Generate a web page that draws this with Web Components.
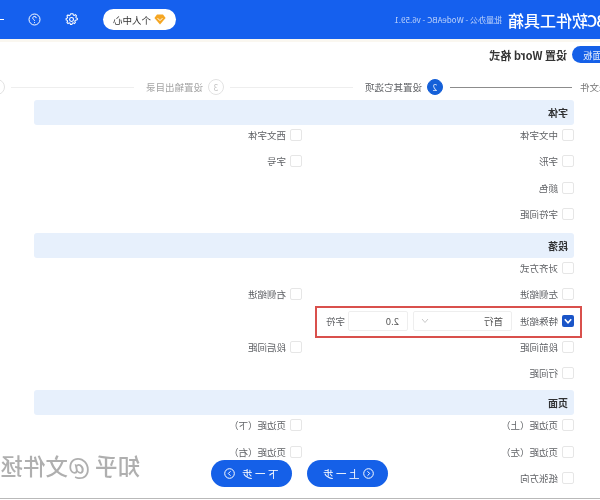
<!DOCTYPE html>
<html lang="zh">
<head>
<meta charset="utf-8">
<title>设置 Word 格式</title>
<style>
  html, body { margin: 0; padding: 0; background: #fff; overflow: hidden; }
  body { font-family: "Noto Sans CJK SC", "Liberation Sans", sans-serif; }
</style>
</head>
<body>
<wb-app>
  <wb-header slot="header"></wb-header>
  <wb-title></wb-title>
  <wb-steps></wb-steps>

  <wb-section title="字体" style="margin-bottom: 9px">
    <wb-option label="中文字体"></wb-option>
    <wb-option label="西文字体"></wb-option>
    <wb-option label="字形"></wb-option>
    <wb-option label="字号"></wb-option>
    <wb-option label="颜色"></wb-option>
    <wb-option></wb-option>
    <wb-option label="字符间距"></wb-option>
    <wb-option></wb-option>
  </wb-section>

  <wb-section title="段落" style="margin-bottom: 7px">
    <wb-option label="对齐方式"></wb-option>
    <wb-option></wb-option>
    <wb-option label="左侧缩进"></wb-option>
    <wb-option label="右侧缩进"></wb-option>
    <wb-indent></wb-indent>
    <wb-option label="段前间距"></wb-option>
    <wb-option label="段后间距"></wb-option>
    <wb-option label="行间距"></wb-option>
    <wb-option></wb-option>
  </wb-section>

  <wb-section title="页面">
    <wb-option label="页边距（上）"></wb-option>
    <wb-option label="页边距（下）"></wb-option>
    <wb-option label="页边距（左）"></wb-option>
    <wb-option label="页边距（右）"></wb-option>
    <wb-option label="纸张方向"></wb-option>
    <wb-option></wb-option>
  </wb-section>

  <wb-footer slot="overlay"></wb-footer>
  <wb-watermark slot="overlay"></wb-watermark>
</wb-app>

<script>
// the whole reference is a mirrored screenshot, so the app is laid out normally and flipped once here
class WbApp extends HTMLElement {
  constructor() {
    super();
    this.attachShadow({ mode: 'open' });
    this.shadowRoot.innerHTML = `
      <style>
        :host {
          display: block;
          width: 600px;
          height: 500px;
          overflow: hidden;
          transform: scaleX(-1);
          font-family: "Noto Sans CJK SC", "Liberation Sans", sans-serif;
          color: #606266;
        }
        .frame { display: flex; flex-direction: column; height: 498px; position: relative; overflow: hidden; }
        .edge { height: 1px; background: #b9b9b9; }
        .body { flex: 1; min-height: 0; overflow: hidden; }
      </style>
      <div class="frame">
        <slot name="header"></slot>
        <div class="body"><slot></slot></div>
        <slot name="overlay"></slot>
      </div>
      <div class="edge"></div>
    `;
  }
}

class WbHeader extends HTMLElement {
  constructor() {
    super();
    this.attachShadow({ mode: 'open' });
    this.shadowRoot.innerHTML = `
      <style>
        :host {
          display: flex;
          align-items: center;
          height: 39px;
          flex: none;
          background: #1560ee;
          border-bottom: 3px solid #faf7f0;
          color: #fff;
          overflow: hidden;
        }
        .name { font-size: 16px; font-weight: 500; margin-left: -48px; white-space: nowrap; }
        .name span { letter-spacing: -1px; }
        .sub { font-size: 8px; margin-left: 6px; color: rgba(255,255,255,.72); white-space: nowrap; }
        .pill {
          display: flex;
          align-items: center;
          gap: 3px;
          box-sizing: border-box;
          flex: none;
          width: 73px;
          height: 21px;
          margin-left: auto;
          padding-left: 10px;
          background: #fff;
          border-radius: 11px;
          color: #333;
          font-size: 9.500px;
        }
        .icons { display: flex; align-items: center; flex: none; gap: 24px; margin: 0 -4px 0 25px; }
        .dash { width: 8px; height: 1px; background: #fff; }
        svg { display: block; }
      </style>
      <span class="name">我的<span>ABC</span>软件工具箱</span>
      <span class="sub">批量办公 - WodeABC - v6.59.1</span>
      <div class="pill">
        <svg width="12" height="11" viewBox="0 0 12 11"><path d="M3 .5h6L11.6 4 6 10.5.4 4z" fill="#f5a623"/><path d="M3.6 4.200 6 6.600l2.400-2.400" fill="none" stroke="#fff" stroke-width="1"/></svg>
        <span>个人中心</span>
      </div>
      <div class="icons">
        <svg width="13" height="13" viewBox="0 0 24 24" fill="none" stroke="#fff" stroke-width="2"><path d="M12 2.500l2 .2.8 2.600 1.700.7 2.400-1.300 2 2-1.300 2.400.7 1.700 2.200.9v2.700l-2.200.9-.7 1.700 1.300 2.400-2 2-2.400-1.300-1.700.7-.8 2.300h-2.700l-.8-2.300-1.700-.7-2.400 1.300-2-2 1.300-2.400-.7-1.700L.7 14v-2.700l2.200-.9.7-1.700-1.300-2.400 2-2L6.700 5.600l1.700-.7.8-2.400z" transform="translate(.6 -.9) scale(.95)"/><circle cx="12" cy="12" r="3.600"/></svg>
        <svg width="13" height="13" viewBox="0 0 13 13" fill="none" stroke="#fff" stroke-width="1"><circle cx="6.500" cy="6.500" r="5.500"/><path d="M4.800 5.100a1.700 1.700 0 1 1 2.500 1.500c-.6.3-.8.6-.8 1.200"/><path d="M6.500 9.200v.9"/></svg>
        <i class="dash"></i>
      </div>
    `;
  }
}

class WbTitle extends HTMLElement {
  constructor() {
    super();
    this.attachShadow({ mode: 'open' });
    this.shadowRoot.innerHTML = `
      <style>
        :host { display: flex; align-items: center; height: 21px; margin-top: 2px; overflow: hidden; }
        .back {
          display: flex;
          align-items: center;
          justify-content: flex-end;
          width: 28px;
          height: 17px;
          padding-right: 11px;
          box-sizing: border-box;
          background: #1560e8;
          border-radius: 0 9px 9px 0;
          color: #e4ecfb;
          font-size: 9.500px;
          white-space: nowrap;
        }
        h1 { margin: 0 0 0 5px; font-size: 11px; font-weight: 700; color: #333; }
      </style>
      <span class="back">面板</span>
      <h1>设置 Word 格式</h1>
    `;
  }
}

class WbSteps extends HTMLElement {
  constructor() {
    super();
    this.attachShadow({ mode: 'open' });
    this.shadowRoot.innerHTML = `
      <style>
        :host {
          display: flex;
          align-items: center;
          width: 640px;
          height: 18px;
          margin: 13px 0 4px -18px;
          font-size: 9.500px;
          white-space: nowrap;
          overflow: hidden;
        }
        .line { height: 1px; width: 122px; margin: 0 7px 0 8px; background: #8c8c8c; flex: none; }
        .line.off { background: #eeeeee; width: 123px; margin: 0 6px 0 12px; }
        .dot {
          box-sizing: border-box;
          display: flex;
          align-items: center;
          justify-content: center;
          flex: none;
          width: 16px;
          height: 16px;
          margin-right: 5px;
          border-radius: 50%;
          border: 1px solid #e2e2e2;
          color: #c4c4c4;
          font-size: 8.500px;
        }
        .dot.on { background: #1560d8; border-color: #1560d8; color: #dfe9fb; }
        .off-text { color: #a4a4a4; }
        .done { color: #777; }
        .cur { color: #606266; }
      </style>
      <span class="done">选择文件</span>
      <i class="line"></i>
      <span class="dot on">2</span>
      <span class="cur">设置其它选项</span>
      <i class="line off"></i>
      <span class="dot">3</span>
      <span class="off-text">设置输出目录</span>
      <i class="line off"></i>
      <span class="dot">4</span>
    `;
  }
}

class WbSection extends HTMLElement {
  constructor() {
    super();
    this.attachShadow({ mode: 'open' });
    this.shadowRoot.innerHTML = `
      <style>
        :host { display: block; width: 540px; margin: 0 0 8px 26px; }
        .head {
          display: flex;
          align-items: center;
          box-sizing: border-box;
          height: 25px;
          padding-left: 6px;
          background: #e7f0fc;
          border-radius: 3px;
          font-size: 10px;
          font-weight: 700;
          color: #303133;
        }
        .rows { display: grid; grid-template-columns: 272px 1fr; row-gap: 6.330px; }
      </style>
      <div class="head"></div>
      <div class="rows"><slot></slot></div>
    `;
  }

  connectedCallback() {
    this.shadowRoot.querySelector('.head').textContent = this.getAttribute('title');
    this.removeAttribute('title');
  }
}

class WbOption extends HTMLElement {
  constructor() {
    super();
    this.attachShadow({ mode: 'open' });
    this.shadowRoot.innerHTML = `
      <style>
        :host { display: flex; align-items: center; gap: 4px; height: 20px; font-size: 9.500px; color: #606266; white-space: nowrap; }
        .box { box-sizing: border-box; width: 12px; height: 12px; border: 1px solid #e6e6e6; border-radius: 2px; background: #fff; flex: none; }
      </style>
      <span class="box"></span><span class="text"></span>
    `;
  }

  connectedCallback() {
    if (!this.hasAttribute('label')) {
      this.style.visibility = 'hidden';
      return;
    }
    this.shadowRoot.querySelector('.text').textContent = this.getAttribute('label');
  }
}

class WbIndent extends HTMLElement {
  constructor() {
    super();
    this.attachShadow({ mode: 'open' });
    this.shadowRoot.innerHTML = `
      <style>
        :host {
          grid-column: 1 / -1;
          display: flex;
          align-items: center;
          height: 20px;
          position: relative;
          font-size: 9.500px;
          color: #606266;
          white-space: nowrap;
        }
        /* the red callout was drawn over the screenshot */
        :host::after {
          content: "";
          position: absolute;
          left: -8px;
          top: -5px;
          width: 267px;
          height: 32px;
          box-sizing: border-box;
          border: 2px solid #d9504c;
        }
        .box { width: 12px; height: 12px; border-radius: 2px; background: #1a55c8; flex: none; margin-right: 4px; }
        .box svg { display: block; }
        .field {
          display: flex;
          align-items: center;
          box-sizing: border-box;
          height: 20px;
          border: 1px solid #eeeeee;
          border-radius: 2px;
          color: #555;
        }
        .select { width: 99px; margin-left: 8px; padding: 0 7px 0 8px; justify-content: space-between; }
        .input { width: 60px; margin-left: 5px; padding-left: 8px; }
        .unit { margin-left: 3px; }
      </style>
      <span class="box"><svg width="12" height="12" viewBox="0 0 12 12"><path d="M2.800 4.200 6 7.800l3.200-3.600" fill="none" stroke="#fff" stroke-width="1.600"/></svg></span>
      <span>特殊缩进</span>
      <span class="field select">
        <span>首行</span>
        <svg width="8" height="6" viewBox="0 0 8 6"><path d="M1 1l3 3.500L7 1" fill="none" stroke="#c8c8c8" stroke-width="1"/></svg>
      </span>
      <span class="field input">2.0</span>
      <span class="unit">字符</span>
    `;
  }
}

class WbButton extends HTMLElement {
  constructor() {
    super();
    this.attachShadow({ mode: 'open' });
    this.shadowRoot.innerHTML = `
      <style>
        :host {
          display: flex;
          align-items: center;
          justify-content: center;
          gap: 4px;
          width: 81px;
          height: 27px;
          border-radius: 14px;
          background: #1560e8;
          color: #fff;
          font-size: 10.500px;
          letter-spacing: 2.500px;
        }
        :host([dir-next]) { flex-direction: row-reverse; }
        svg { display: block; }
      </style>
      <svg width="11" height="11" viewBox="0 0 11 11" fill="none" stroke="#fff" stroke-width="1"><circle cx="5.500" cy="5.500" r="4.800"/><path class="chev"/></svg>
      <slot></slot>
    `;
  }

  connectedCallback() {
    const next = this.hasAttribute('dir-next');
    this.shadowRoot.querySelector('.chev').setAttribute('d', next ? 'M4.500 3.300l2.200 2.200-2.200 2.200' : 'M6.500 3.300L4.300 5.500l2.200 2.200');
  }
}

class WbFooter extends HTMLElement {
  constructor() {
    super();
    this.attachShadow({ mode: 'open' });
    this.shadowRoot.innerHTML = `
      <style>
        :host {
          position: absolute;
          left: 212px;
          top: 460px;
          display: flex;
          gap: 15px;
        }
      </style>
      <wb-button>上一步</wb-button>
      <wb-button dir-next>下一步</wb-button>
    `;
  }
}

class WbWatermark extends HTMLElement {
  constructor() {
    super();
    this.attachShadow({ mode: 'open' });
    this.shadowRoot.innerHTML = `
      <style>
        :host {
          position: absolute;
          left: 460px;
          top: 448px;
          font-size: 22.500px;
          font-weight: 500;
          line-height: 34px;
          color: rgba(110,110,110,.55);
          text-shadow: 0 0 2px rgba(255,255,255,.8);
          white-space: nowrap;
        }
      </style>
      知乎 @文件拯救
    `;
  }
}

customElements.define('wb-button', WbButton);
customElements.define('wb-app', WbApp);
customElements.define('wb-header', WbHeader);
customElements.define('wb-title', WbTitle);
customElements.define('wb-steps', WbSteps);
customElements.define('wb-section', WbSection);
customElements.define('wb-option', WbOption);
customElements.define('wb-indent', WbIndent);
customElements.define('wb-footer', WbFooter);
customElements.define('wb-watermark', WbWatermark);
</script>
</body>
</html>
